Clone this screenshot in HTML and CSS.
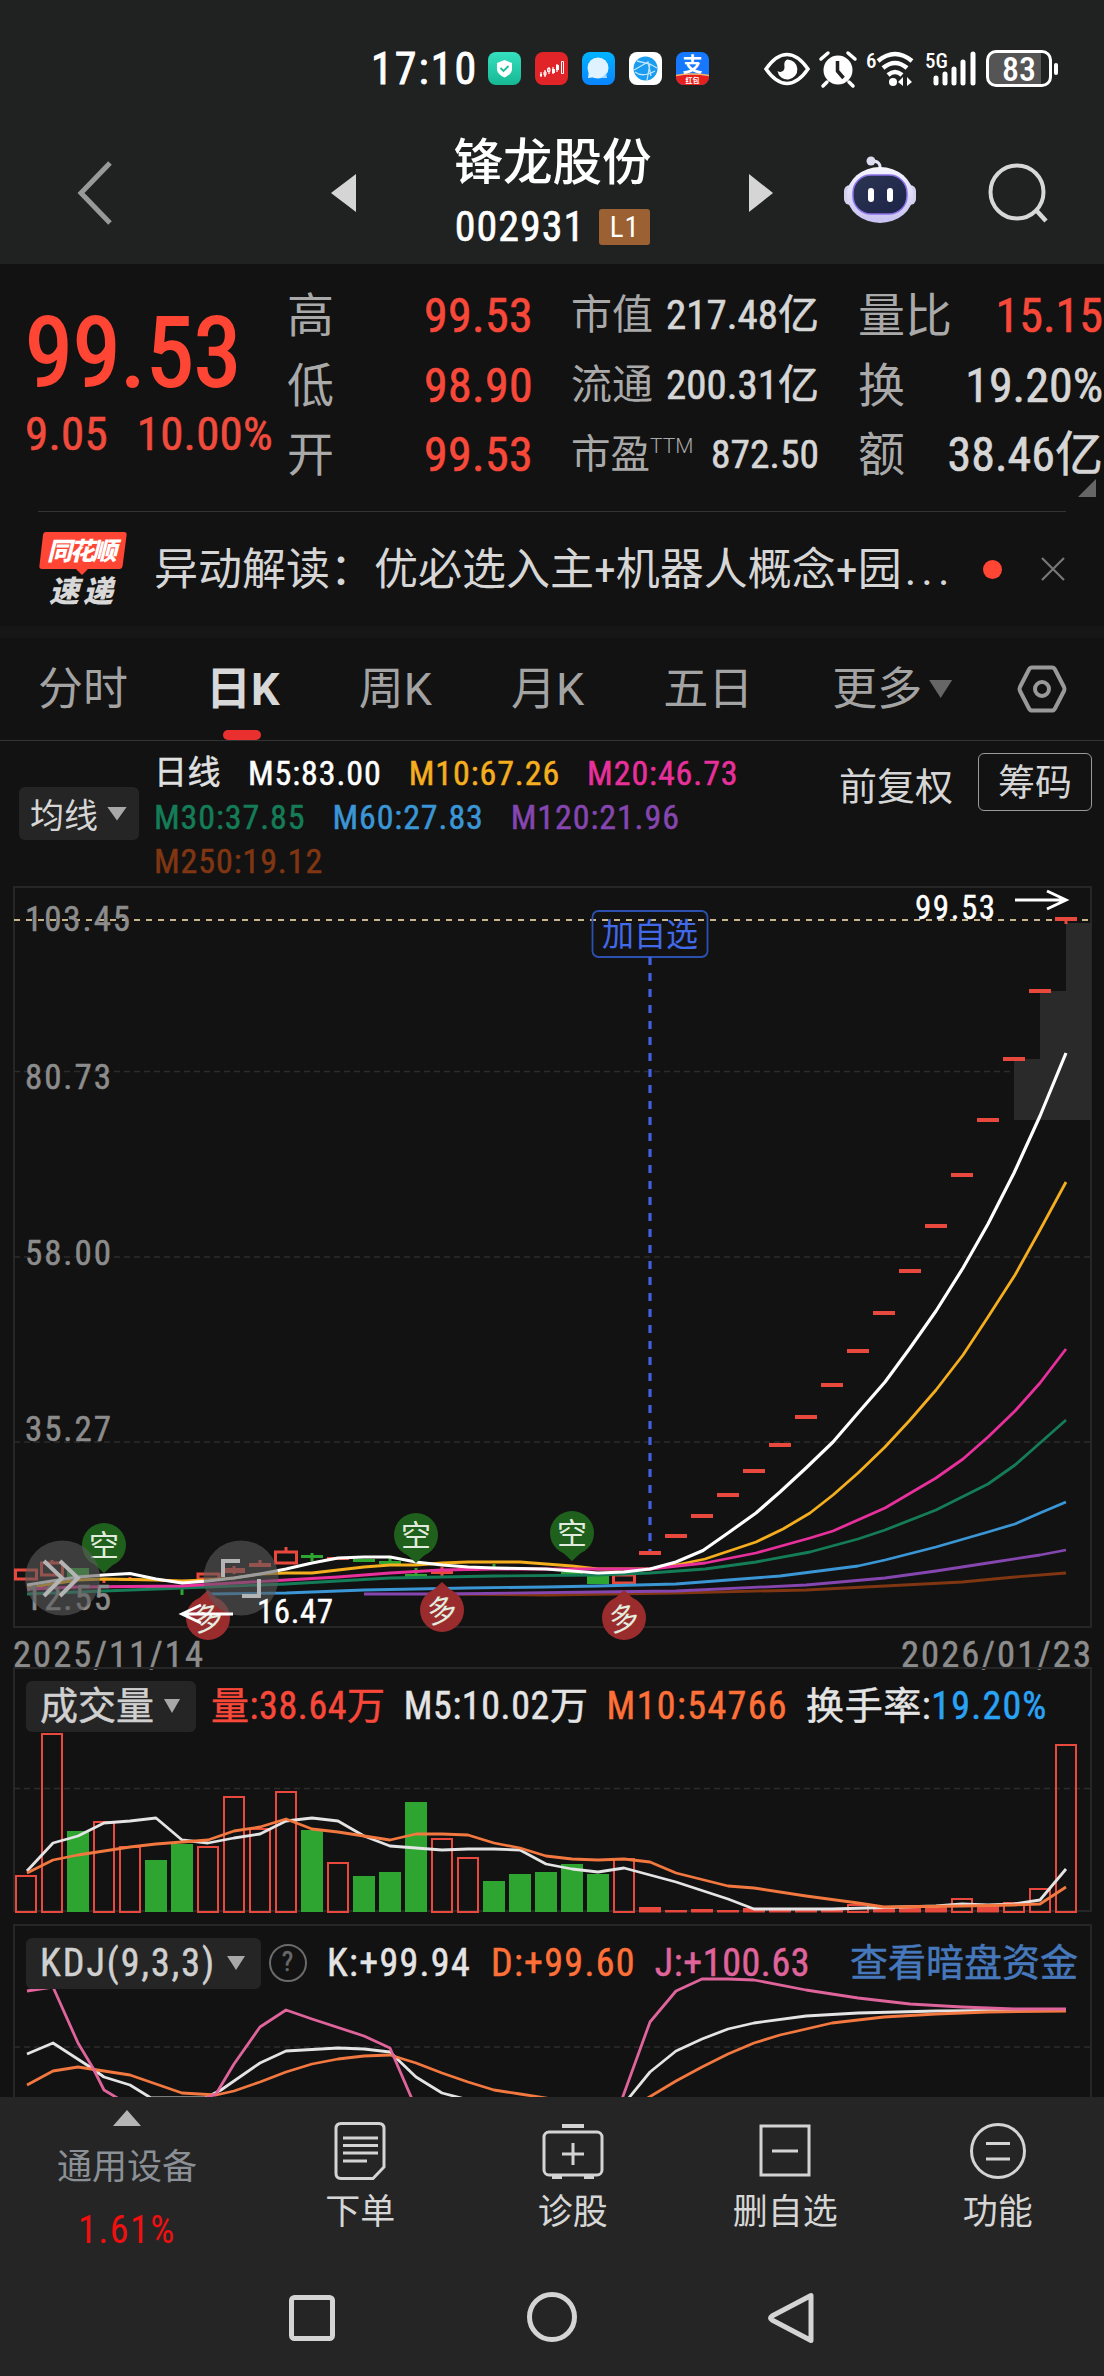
FILE: index.html
```html
<!DOCTYPE html>
<html lang="zh-CN">
<head>
<meta charset="UTF-8">
<meta name="viewport" content="width=device-width, initial-scale=1.0">
<title>锋龙股份 002931</title>
<link rel="stylesheet" href="styles.css">
</head>
<body>

<div class="status-bar">
    <span class="time">17:10</span>
    <div class="app-icons">
        <svg width="33" height="33" viewBox="0 0 33 33">
            <defs><linearGradient id="teal" x2="0" y2="1"><stop offset="0" stop-color="#35e0c0"/><stop offset="1" stop-color="#16b893"/></linearGradient></defs>
            <rect width="33" height="33" rx="8" fill="url(#teal)"/>
            <path d="M16.500 8l7.500 3v6c0 4-3.500 6.500-7.500 8.500-4-2-7.500-4.500-7.500-8.500v-6z" fill="#fff"/>
            <path d="M12.500 16l3 3 5-5" fill="none" stroke="#1bbf9b" stroke-width="1.800"/>
        </svg>
        <svg width="33" height="33" viewBox="0 0 33 33">
            <rect width="33" height="33" rx="8" fill="#e02427"/>
            <path d="M6 20v5M10 18v7M14 15v7M18 15v7M22 12v8" stroke="#fff" stroke-width="1.200"/>
            <path d="M5 22h2v2H5zM17 17h3v4h-3zM21 13h3v5h-3z" fill="#fff"/>
            <path d="M9 20h2v3H9zM12.500 16.500h2.500v3h-2.500zM26.500 9.500h2v12h-2z" fill="none" stroke="#fff"/>
        </svg>
        <svg width="33" height="33" viewBox="0 0 33 33">
            <defs><linearGradient id="blue" x2="0" y2="1"><stop offset="0" stop-color="#00b4ff"/><stop offset="1" stop-color="#0a84ff"/></linearGradient></defs>
            <rect width="33" height="33" rx="8" fill="url(#blue)"/>
            <circle cx="16" cy="16" r="10.500" fill="#dff2ff"/>
            <path d="M7 19l-1 7 8-1z" fill="#dff2ff"/>
            <path d="M24 21a11 11 0 0 1-6 5l7 0z" fill="#a6d8ff"/>
        </svg>
        <svg width="33" height="33" viewBox="0 0 33 33">
            <rect width="33" height="33" rx="8" fill="#fff"/>
            <circle cx="16.500" cy="16.500" r="12" fill="#1a9df0"/>
            <path d="M8 9l13 3 7 4M21 12l-3 16M5 18l14-8 3 14M6 20c5 4 11 4 20-1" fill="none" stroke="#bfe4ff" stroke-width="1.300"/>
        </svg>
        <svg width="33" height="33" viewBox="0 0 33 33">
            <defs><clipPath id="tile"><rect width="33" height="33" rx="8"/></clipPath></defs>
            <g clip-path="url(#tile)">
                <rect width="33" height="33" fill="#1677ff"/>
                <path d="M0 24q16-3 33 0v9H0z" fill="#e8201c"/>
                <path d="M0 23.500q16-3 33 0" fill="none" stroke="#ffb060" stroke-width="1.500"/>
            </g>
            <text x="16.500" y="20" class="tile-char">支</text>
            <text x="16.500" y="31" class="tile-sub">红包</text>
        </svg>
    </div>
    <div class="sys-icons">
        <svg width="46" height="34" viewBox="0 0 46 34">
            <path d="M2 17C9 7 15 2.500 23 2.500S37 7 44 17C37 27 31 31.500 23 31.500S9 27 2 17z" fill="none" stroke="#fff" stroke-width="3.500"/>
            <path d="M23 7.500a10 10 0 1 1-9.500 11.500c3 2 7 .5 7-3.500 0-3.500-1-5.500 2.500-8z" fill="#fff"/>
        </svg>
        <svg width="38" height="36" viewBox="0 0 38 36">
            <circle cx="19" cy="19" r="14.500" fill="#fff"/>
            <path d="M2 8l7-6M36 8l-7-6M8 31l-4 4M30 31l4 4" stroke="#fff" stroke-width="3.500" stroke-linecap="round"/>
            <path d="M18.500 10v10l6 7" fill="none" stroke="#202221" stroke-width="3.500"/>
        </svg>
        <svg width="50" height="38" viewBox="0 0 50 38">
            <text x="0" y="18" class="sys-small">6</text>
            <path d="M12 11Q29-3 46 11" class="wave"/>
            <path d="M17 18Q29 8 41 18" class="wave"/>
            <path d="M22 25Q29 19 36 25" class="wave"/>
            <circle cx="27" cy="32" r="4" fill="#fff"/>
            <path d="M37 27v9l-5-4M41 36v-9l5 5z" fill="#fff"/>
        </svg>
        <svg width="52" height="38" viewBox="0 0 52 38">
            <text x="0" y="18" class="sys-small">5G</text>
            <path d="M11 28v5M20 24v9M29 19v14M38 12v21M48 4v29" stroke="#fff" stroke-width="5" stroke-linecap="round"/>
        </svg>
        <div class="battery"><span>83</span></div>
    </div>
</div>

<div class="header">
    <svg class="back" width="40" height="66" viewBox="0 0 40 66"><path d="M35 3L6 33l29 30" fill="none" stroke="#999" stroke-width="5"/></svg>
    <div class="arrow-left"></div>
    <div class="title">
        <h1>锋龙股份</h1>
        <div class="code"><span>002931</span><em>L1</em></div>
    </div>
    <div class="arrow-right"></div>
    <svg class="robot" width="72" height="68" viewBox="0 0 72 68">
        <defs>
            <linearGradient id="shell" x2="0" y2="1"><stop offset="0" stop-color="#f6f6ff"/><stop offset="1" stop-color="#c6c1f0"/></linearGradient>
            <linearGradient id="face" x2="1" y2="1"><stop offset="0" stop-color="#2d3553"/><stop offset="1" stop-color="#1b2447"/></linearGradient>
        </defs>
        <path d="M36 13q1-8-8-8" fill="none" stroke="#e3e3f4" stroke-width="3"/>
        <circle cx="27" cy="5" r="4.500" fill="#dcdcee"/>
        <rect x="0" y="29" width="12" height="20" rx="6" fill="#d4d3ee"/>
        <rect x="60" y="29" width="12" height="20" rx="6" fill="#d4d3ee"/>
        <ellipse cx="36" cy="39" rx="33" ry="28" fill="url(#shell)"/>
        <rect x="9" y="19" width="54" height="39" rx="18" fill="url(#face)" stroke="#8a70e8" stroke-width="1.500"/>
        <path d="M27 35v8M46 35v8" stroke="#fff" stroke-width="6" stroke-linecap="round"/>
    </svg>
    <svg class="search" width="62" height="62" viewBox="0 0 62 62">
        <circle cx="29" cy="30" r="26.500" fill="none" stroke="#d8d8d8" stroke-width="4"/>
        <path d="M48 48l10 11" stroke="#d8d8d8" stroke-width="4.500"/>
    </svg>
</div>

<div class="quote">
    <div class="price">
        <strong>99.53</strong>
        <div class="change"><span>9.05</span><span>10.00%</span></div>
    </div>
    <dl class="col col-high">
        <div><dt>高</dt><dd class="up">99.53</dd></div>
        <div><dt>低</dt><dd class="up">98.90</dd></div>
        <div><dt>开</dt><dd class="up">99.53</dd></div>
    </dl>
    <dl class="col col-cap">
        <div><dt>市值</dt><dd>217.48亿</dd></div>
        <div><dt>流通</dt><dd>200.31亿</dd></div>
        <div class="pe"><dt>市盈<sup>TTM</sup></dt><dd>872.50</dd></div>
    </dl>
    <dl class="col col-vol">
        <div><dt>量比</dt><dd class="up">15.15</dd></div>
        <div><dt>换</dt><dd>19.20%</dd></div>
        <div><dt>额</dt><dd>38.46亿</dd></div>
    </dl>
    <i class="corner"></i>
</div>

<div class="news">
    <svg width="90" height="76" viewBox="0 0 90 76">
        <path d="M8 1h78q3 0 2.600 3l-4 31q-.4 3-3.400 3H50l-6 6-6-6H4q-3 0-2.600-3L5 4q.4-3 3-3z" fill="#ff4534"/>
        <text x="44" y="29" class="brand" textLength="70">同花顺</text>
        <text x="43" y="71" class="brand brand-sub" textLength="64">速递</text>
    </svg>
    <p><span>异动解读：</span>优必选入主+机器人概念+园<span class="dots">...</span></p>
    <i class="dot"></i>
    <svg width="26" height="26" viewBox="0 0 26 26"><path d="M2 2l22 22M24 2L2 24" stroke="#777" stroke-width="2.200"/></svg>
</div>

<div class="tabs">
    <span>分时</span>
    <span class="active">日K</span>
    <span>周K</span>
    <span>月K</span>
    <span>五日</span>
    <span class="more">更多<i class="caret"></i></span>
    <svg width="50" height="48" viewBox="0 0 50 48" fill="none" stroke="#999" stroke-width="4">
        <path d="M15 2.500h20q2 0 3 2l9 17.500q1 2 0 4l-9 17.500q-1 2-3 2H15q-2 0-3-2L3 26q-1-2 0-4l9-17.500q1-2 3-2z"/>
        <circle cx="25" cy="24" r="7"/>
    </svg>
</div>

<div class="ma-bar">
    <div class="pill">均线<i class="caret"></i></div>
    <div class="ma-list">
        <div><span class="c-line">日线</span><span class="c-m5">M5:83.00</span><span class="c-m10">M10:67.26</span><span class="c-m20">M20:46.73</span></div>
        <div><span class="c-m30">M30:37.85</span><span class="c-m60">M60:27.83</span><span class="c-m120">M120:21.96</span></div>
        <div><span class="c-m250">M250:19.12</span></div>
    </div>
    <span class="adjust">前复权</span>
    <span class="chips">筹码</span>
</div>

<svg class="chart" id="kline" width="1104" height="781" viewBox="0 886 1104 781"></svg>

<div class="panel panel-volume">
    <svg class="chart" id="volume" width="1104" height="257" viewBox="0 1667 1104 257"></svg>
    <div class="legend legend-volume">
        <span class="pill">成交量<i class="caret"></i></span>
        <span class="up">量:38.64万</span>
        <span>M5:10.02万</span>
        <span class="orange">M10:54766</span>
        <span>换手率:<b>19.20%</b></span>
    </div>
</div>

<div class="panel panel-kdj">
    <svg class="chart" id="kdj" width="1104" height="173" viewBox="0 1924 1104 173"></svg>
    <div class="legend legend-kdj">
        <span class="pill">KDJ(9,3,3)<i class="caret"></i></span>
        <i class="help">?</i>
        <span>K:+99.94</span>
        <span class="orange">D:+99.60</span>
        <span class="pink">J:+100.63</span>
        <a>查看暗盘资金</a>
    </div>
</div>

<div class="actions">
    <div class="sector">
        <i class="caret-up"></i>
        <span>通用设备</span>
        <b>1.61%</b>
    </div>
    <div class="action">
        <svg width="54" height="60" viewBox="0 0 54 60">
            <path d="M8 2.500h38q5 0 5 5V46L40 57.500H8q-5 0-5-5v-45q0-5 5-5z"/>
            <path d="M10 17h35M10 24.500h35M10 32h35M10 40h24"/>
        </svg>
        <span>下单</span>
    </div>
    <div class="action">
        <svg width="62" height="60" viewBox="0 0 62 60">
            <path d="M20 5h22" stroke-width="4"/>
            <rect x="2" y="11" width="58" height="43" rx="5"/>
            <path d="M31 22v22M20 33h22"/>
            <path d="M10 56h10M42 56h10" stroke-width="4"/>
        </svg>
        <span>诊股</span>
    </div>
    <div class="action">
        <svg width="54" height="60" viewBox="0 0 54 60">
            <rect x="3" y="5" width="48" height="49"/>
            <path d="M14 30h26"/>
        </svg>
        <span>删自选</span>
    </div>
    <div class="action">
        <svg width="58" height="60" viewBox="0 0 58 60">
            <circle cx="29" cy="30" r="26.500"/>
            <path d="M17 22.500h24M17 38h24"/>
        </svg>
        <span>功能</span>
    </div>
</div>

<div class="nav-bar">
    <svg width="48" height="54" viewBox="0 0 48 54"><rect x="3.500" y="6.500" width="41" height="41" rx="3"/></svg>
    <svg width="52" height="54" viewBox="0 0 52 54"><circle cx="26" cy="26" r="22.500"/></svg>
    <svg width="48" height="54" viewBox="0 0 48 54"><path d="M43 4.500v45L4 29q-3-2 0-4z" stroke-linejoin="round"/></svg>
</div>

<script src="chart.js"></script>
</body>
</html>
```
FILE: styles.css
```css
* {
    box-sizing: border-box;
}
body {
    width: 1104px;
    margin: 0;
    background-color: #121212;
    color: #d6d6d6;
    font-family: "Roboto Condensed", "Noto Sans CJK SC", sans-serif;
    font-weight: 400;
    overflow-x: hidden;
}
svg {
    display: block;
    flex: none;
    overflow: visible;
}
i, em {
    font-style: normal;
}
.up { color: #f8483a; }
.orange { color: #ff7038; }
.pink { color: #e0649c; }

/* status bar */
.status-bar {
    display: flex;
    align-items: center;
    height: 110px;
    padding: 27px 44px 0 371px;
    background-color: #202221;
    color: #fff;
}
.time {
    width: 117px;
    font-size: 44px;
    letter-spacing: 2px;
    line-height: 50px;
    -webkit-text-stroke: 0.9px;
}
.app-icons {
    display: flex;
    gap: 14px;
    margin-right: 55px;
}
.tile-char {
    font-size: 20px;
    font-weight: 700;
    fill: #fff;
    text-anchor: middle;
}
.tile-sub {
    font-size: 7px;
    font-weight: 700;
    fill: #fff;
    text-anchor: middle;
}
.sys-icons {
    display: flex;
    align-items: center;
    gap: 9px;
}
.sys-small {
    font-size: 21px;
    font-weight: 500;
    fill: #fff;
}
.wave {
    fill: none;
    stroke: #fff;
    stroke-width: 4.5;
}
.battery {
    position: relative;
    width: 66px;
    height: 37px;
    border: 3px solid #fff;
    border-radius: 10px;
    background: linear-gradient(90deg, #555 86%, #202221 86%);
    font-size: 34px;
    font-weight: 500;
    line-height: 32px;
    text-align: center;
}
.battery::after {
    content: "";
    position: absolute;
    right: -9px;
    top: 10px;
    width: 4px;
    height: 12px;
    border-radius: 2px;
    background-color: #fff;
}

/* header */
.header {
    display: flex;
    align-items: center;
    height: 154px;
    padding: 11px 54px 0 75px;
    background-color: #202221;
}
.back {
    margin-right: 216px;
}
.arrow-left, .arrow-right {
    border: 19px solid transparent;
}
.arrow-left {
    border-left: 0;
    border-right: 25px solid #d5d5d5;
}
.arrow-right {
    border-right: 0;
    border-left: 24px solid #d5d5d5;
}
.title {
    width: 395px;
    margin-top: -1px;
    text-align: center;
    color: #fff;
}
.title h1 {
    margin: 0 0 3px;
    font-size: 49.5px;
    font-weight: 500;
    line-height: 66px;
}
.code {
    display: flex;
    align-items: center;
    justify-content: center;
    gap: 14px;
    font-size: 42px;
    letter-spacing: 1px;
    line-height: 56px;
    -webkit-text-stroke: 0.6px;
}
.code em {
    width: 51px;
    height: 36px;
    border-radius: 3px;
    background-color: #9c6133;
    font-size: 29px;
    line-height: 37px;
    -webkit-text-stroke: 0;
}
.robot {
    margin: -6px 0 0 71px;
}
.search {
    margin-left: 72px;
}

/* quote */
.quote {
    position: relative;
    display: flex;
    height: 247px;
    padding-top: 17px;
}
.price {
    width: 287px;
    padding: 22px 0 0 25px;
    color: #ff4534;
}
.price strong {
    display: block;
    font-size: 97px;
    font-weight: 400;
    line-height: 100px;
    letter-spacing: -0.2px;
    -webkit-text-stroke: 2px;
}
.change {
    display: flex;
    gap: 29px;
    margin-top: 1px;
    font-size: 47px;
    letter-spacing: 0.2px;
    line-height: 60px;
    color: #f04b3c;
    -webkit-text-stroke: 0.6px;
}
.col {
    margin: 0;
    line-height: 69.5px;
}
.col div {
    display: flex;
    justify-content: space-between;
    height: 69.5px;
    white-space: nowrap;
}
.col dt {
    color: #a9a9a9;
}
.col dd {
    margin: 0;
    -webkit-text-stroke: 0.6px;
}
.col-high {
    width: 246px;
    font-size: 48px;
    letter-spacing: 0.3px;
}
.col-high dt, .col-vol dt {
    font-size: 47px;
}
.col-cap {
    width: 248px;
    margin-left: 38px;
    font-size: 41px;
}
.col-cap .pe {
    font-size: 39.5px;
}
.col-cap sup {
    font-family: Roboto, sans-serif;
    font-size: 21px;
    font-weight: 300;
    line-height: 0;
    vertical-align: 15px;
}
.col-vol {
    width: 245px;
    margin-left: 39px;
    font-size: 48px;
}
.corner {
    position: absolute;
    right: 8px;
    bottom: 14px;
    border: 9px solid;
    border-color: transparent #666 #666 transparent;
}

/* news strip */
.news {
    display: flex;
    align-items: center;
    height: 115px;
    margin: 0 38px;
    border-top: 1px solid #333;
}
.news p {
    flex: 1;
    margin: 2px 0 0 26px;
    font-size: 44px;
    line-height: 60px;
    white-space: nowrap;
}
.dots {
    margin-left: 3px;
    letter-spacing: 5px;
}
.brand {
    font-size: 25px;
    font-weight: 900;
    font-style: italic;
    fill: #fff;
    text-anchor: middle;
}
.brand-sub {
    font-size: 30px;
    fill: #d8d8d8;
}
.dot {
    width: 19px;
    height: 19px;
    margin-right: 38px;
    border-radius: 50%;
    background-color: #ff4534;
}

/* period tabs */
.tabs {
    display: flex;
    align-items: center;
    height: 115px;
    padding: 0 37px 0 38px;
    border-top: 12px solid #161616;
    border-bottom: 1px solid #333;
    font-family: Roboto, "Noto Sans CJK SC", sans-serif;
    font-size: 45px;
    line-height: 103px;
    color: #a3a3a3;
}
.tabs span {
    margin-right: 79px;
    white-space: nowrap;
}
.tabs .active {
    position: relative;
    margin-left: -1px;
    color: #d8d8d8;
    font-weight: 700;
}
.tabs .active::after {
    content: "";
    position: absolute;
    left: 17px;
    bottom: 1px;
    width: 38px;
    height: 10px;
    border-radius: 5px;
    background-color: #ea2f2f;
}
.tabs .more {
    display: flex;
    align-items: center;
    margin-right: auto;
}
.caret {
    display: inline-block;
    width: 20px;
    height: 14px;
    background-color: #a8a8a8;
    clip-path: polygon(0 0, 100% 0, 50% 100%);
}
.tabs .caret {
    width: 23px;
    height: 18px;
    margin-left: 7px;
    background-color: #666;
}
.pill {
    display: flex;
    align-items: center;
    border-radius: 6px;
    background-color: #252525;
    white-space: nowrap;
}

/* moving averages */
.ma-bar {
    display: flex;
    align-items: flex-start;
    height: 145px;
    padding: 12px 12px 0 19px;
    font-size: 34px;
}
.ma-bar .pill {
    width: 120px;
    height: 53px;
    margin: 34px 15px 0 0;
    padding-left: 11px;
    gap: 9px;
}
.ma-list {
    width: 685px;
    margin-top: -2px;
    letter-spacing: 0.9px;
    line-height: 44px;
    -webkit-text-stroke: 0.5px;
}
.ma-list div {
    display: flex;
    gap: 27px;
}
.c-line { color: #e0e0e0; font-size: 33px; letter-spacing: 0.5px; }
.c-m5 { color: #fff; }
.c-m10 { color: #f5ae1e; }
.c-m20 { color: #e8309c; }
.c-m30 { color: #147d58; }
.c-m60 { color: #3b96d6; }
.c-m120 { color: #8646b0; }
.c-m250 { color: #813612; }
.adjust {
    width: 139px;
    margin-top: 4px;
    font-size: 38px;
    line-height: 60px;
    white-space: nowrap;
}
.chips {
    width: 114px;
    height: 58px;
    border: 1.5px solid #9a9a9a;
    border-radius: 6px;
    font-size: 37px;
    line-height: 60px;
    text-align: center;
}

/* charts */
.chart text {
    font-size: 35px;
    fill: #8c8c8c;
}
.chart .scale {
    letter-spacing: 1.9px;
    stroke: #8c8c8c;
    stroke-width: 0.5;
}
.chart .date {
    font-size: 36.5px;
    stroke: #8c8c8c;
    stroke-width: 0.5;
}
.frame {
    fill: none;
    stroke: #262626;
    stroke-width: 2;
}
.grid {
    stroke: #2c2c2c;
    stroke-width: 1.5;
    stroke-dasharray: 6 4;
}
.line {
    fill: none;
    stroke-width: 2.8;
    stroke-linejoin: round;
}
.chart .mark {
    font-size: 30px;
    fill: #e2ecde;
    text-anchor: middle;
}
.chart .white {
    font-size: 33px;
    fill: #fff;
    stroke: #fff;
    stroke-width: 0.4;
}
.chart .add {
    font-size: 32px;
    fill: #4169e8;
    text-anchor: middle;
}
.panel {
    position: relative;
}
.legend {
    position: absolute;
    top: 12px;
    left: 26px;
    display: flex;
    align-items: center;
    width: 1052px;
    font-size: 38px;
    line-height: 54px;
    color: #e4e4e4;
    white-space: nowrap;
    -webkit-text-stroke: 0.5px;
}
.legend .pill {
    height: 51px;
    padding: 0 16px 0 14px;
    gap: 10px;
    color: #d0d0d0;
}
.legend b {
    font-weight: 400;
    letter-spacing: 1.2px;
    color: #2aa3f5;
}
.legend-volume {
    gap: 18px;
    letter-spacing: 0.6px;
}
.legend-volume .pill {
    width: 170px;
    margin-right: -3px;
    letter-spacing: 0;
}
.legend-volume .orange {
    letter-spacing: 1.4px;
}
.legend-kdj {
    gap: 20px;
    letter-spacing: 1.3px;
}
.legend-kdj .pill {
    width: 235px;
    gap: 11px;
    letter-spacing: 2px;
}
.legend-kdj .pink {
    margin-left: -1px;
    letter-spacing: 0.6px;
}
.legend a {
    margin-left: auto;
    letter-spacing: 0;
    color: #4678bb;
}
.help {
    width: 38px;
    height: 38px;
    margin: 0 0 0 -12px;
    border: 2.5px solid #6a6a6a;
    border-radius: 50%;
    font-size: 27px;
    line-height: 33px;
    text-align: center;
    color: #6a6a6a;
}

/* bottom actions */
.actions {
    display: flex;
    height: 153px;
    padding-left: 21px;
    background-color: #252525;
    font-size: 35px;
}
.sector {
    display: flex;
    flex-direction: column;
    align-items: center;
    width: 212px;
    padding-top: 13px;
    color: #8a9095;
}
.caret-up {
    border: 14px solid transparent;
    border-top: 0;
    border-bottom: 16px solid #b5b5b5;
}
.sector span {
    margin-top: 17px;
    line-height: 50px;
}
.sector b {
    margin-top: 12px;
    font-size: 38px;
    font-weight: 400;
    letter-spacing: 1.5px;
    line-height: 50px;
    color: #f01010;
}
.action {
    display: flex;
    flex-direction: column;
    align-items: center;
    width: 212.500px;
    padding-top: 24px;
}
.action:nth-child(2) {
    margin-left: 21px;
}
.action svg {
    fill: none;
    stroke: #d4d4d4;
    stroke-width: 3;
}
.action span {
    margin-top: 8px;
    line-height: 48px;
}
.nav-bar {
    display: flex;
    justify-content: center;
    gap: 190px;
    height: 126px;
    padding-top: 41px;
    background-color: #252525;
}
.nav-bar svg {
    fill: none;
    stroke: #d4d4d4;
    stroke-width: 5;
}
```
FILE: chart.js
```javascript
const STEP = 26;
const RED = '#e8493c';
const GREEN = '#2fa531';
const px = i => 26 + i * STEP;

const line = (points, color, width) =>
    `<polyline class="line" points="${points}" stroke="${color}"${width ? ` style="stroke-width:${width}"` : ''}/>`;
const grid = y => `<line class="grid" x1="14" x2="1091" y1="${y}" y2="${y}"/>`;
const rect = (x, y, w, h, fill) => `<rect x="${x}" y="${y}" width="${w}" height="${h}" fill="${fill}"/>`;
const hollow = (x, y, w, h, sw) =>
    `<rect x="${x}" y="${y}" width="${w}" height="${h}" fill="none" stroke="${RED}" stroke-width="${sw}"/>`;
const wick = (x, y1, y2, color) => rect(x - 1.5, y1, 3, y2 - y1, color);

function drawKline() {
    let s = '<rect class="frame" x="14" y="887" width="1077" height="740"/>';
    s += [1071.5, 1257, 1442].map(grid).join('');

    // gap area
    s += rect(1014, 1059, 77, 61, '#2a2a2a') + rect(1040, 991, 51, 68, '#2a2a2a') + rect(1066, 923, 25, 68, '#2a2a2a');
    s += '<line x1="14" x2="1091" y1="920" y2="920" stroke="#c9b68c" stroke-width="2" stroke-dasharray="6 6"/>';

    // candles on the left
    s += hollow(15.5, 1570, 21, 9, 3) + hollow(41.5, 1563, 21, 12, 3) + wick(52, 1560, 1563, RED);
    s += rect(67, 1568, 22, 10, GREEN);
    s += wick(104, 1578, 1583, RED) + rect(119, 1578, 22, 3, RED) + wick(130, 1577, 1580, RED);
    s += rect(145, 1585, 22, 3, GREEN) + wick(182, 1589, 1595, GREEN);
    s += hollow(198, 1574, 21, 5, 3) + rect(223, 1568, 22, 5, RED) + wick(234, 1566, 1574, RED);
    s += rect(249, 1563, 22, 4, RED) + wick(260, 1560, 1567, RED);
    s += hollow(275.5, 1552, 21, 11, 3) + wick(286, 1547, 1552, RED);
    s += rect(301, 1555, 22, 3, GREEN) + wick(312, 1553, 1561, GREEN) + rect(327, 1557, 22, 3, RED);
    s += rect(353, 1559, 22, 3, GREEN) + rect(379, 1561, 22, 3, GREEN) + wick(390, 1558, 1562, GREEN);
    s += rect(405, 1574, 22, 3, GREEN) + wick(416, 1568, 1577, GREEN);
    s += rect(431, 1569, 22, 5, RED) + wick(442, 1567, 1577, RED) + rect(457, 1568, 22, 3, RED);
    s += wick(494, 1564, 1567, GREEN) + rect(561, 1572, 22, 4, GREEN);
    s += rect(587, 1576, 22, 8, GREEN) + hollow(613.5, 1575, 21, 8, 3);

    // limit-up days
    [1553, 1536, 1516, 1495, 1471, 1445, 1417, 1385, 1351, 1313, 1271, 1226, 1175, 1120, 1059, 991, 919]
        .forEach((y, i) => s += rect(px(24 + i) - 11, y - 2, 22, 4, RED));
    s += wick(1066, 920, 924, RED);

    s += line('442,1594 546,1595 676,1593 806,1590 885,1586 962,1582 1015,1577 1066,1573', '#813612');
    s += line('364,1594 442,1594 598,1592 676,1591 806,1585 885,1578 936,1571 988,1563 1040,1555 1066,1550', '#8646b0');
    s += line('208,1594 286,1593 364,1590 468,1588 546,1587 598,1586 676,1584 780,1576 858,1566 885,1560 936,1547 988,1532 1015,1524 1040,1513 1066,1502', '#3b96d6');
    s += line('27,1594 182,1588 286,1584 390,1578 494,1576 598,1575 650,1573 705,1569 756,1562 810,1552 858,1539 885,1530 936,1510 988,1484 1015,1465 1040,1443 1066,1420', '#147d58');
    s += line('27,1588 52,1584 78,1580 104,1579 156,1580 182,1581 208,1580 234,1578 260,1574 286,1573 312,1573 338,1570 364,1567 390,1565 416,1565 442,1563 468,1562 520,1562 546,1564 572,1566 598,1569 650,1569 676,1565 705,1559 756,1542 783,1529 810,1513 833,1495 858,1473 885,1447 910,1420 936,1390 963,1355 988,1317 1015,1275 1040,1230 1066,1182', '#f5ae1e');
    s += line('27,1589 78,1587 182,1586 234,1583 286,1580 338,1577 390,1573 442,1570 494,1569 650,1569 705,1563 756,1553 810,1538 833,1531 885,1508 936,1478 963,1459 988,1437 1015,1411 1040,1383 1066,1349', '#e8309c');
    s += line('27,1585 52,1581 78,1577 104,1575 130,1573.5 156,1579 182,1583 208,1581 234,1578 260,1574 286,1569 312,1563 338,1558 364,1557 390,1557 416,1562 442,1565 468,1567 494,1568 546,1569 572,1571 598,1573 624,1572 650,1569 676,1562 703,1550.5 728,1533 756,1513 780,1492 806,1468 833,1442 858,1413 885,1382 910,1348 936,1311 963,1268 988,1224 1014,1173 1040,1116 1066,1053', '#fff', 3.2);

    // price scale
    [['103.45', 931], ['80.73', 1089], ['58.00', 1265], ['35.27', 1441], ['12.55', 1610]]
        .forEach(([t, y]) => s += `<text class="scale" x="25" y="${y}">${t}</text>`);
    s += '<text class="date" x="13" y="1667" textLength="190">2025/11/14</text>';
    s += '<text class="date" x="901" y="1667" textLength="190">2026/01/23</text>';

    // short / long signals
    [[104, 1545], [416, 1535], [572, 1533]].forEach(([x, y]) => {
        s += `<circle cx="${x}" cy="${y}" r="22" fill="#1f611c"/><path d="M${x - 13} ${y + 16}L${x} ${y + 28}L${x + 13} ${y + 16}z" fill="#1f611c"/>`;
        s += `<text class="mark" x="${x}" y="${y + 11}">空</text>`;
    });
    [[208, 1618], [442, 1610], [624, 1618]].forEach(([x, y]) => {
        s += `<circle cx="${x}" cy="${y}" r="22" fill="#9a2c2e"/><path d="M${x - 13} ${y - 16}L${x} ${y - 28}L${x + 13} ${y - 16}z" fill="#9a2c2e"/>`;
        s += `<text class="mark" x="${x}" y="${y + 11}" transform="rotate(-12 ${x} ${y})">多</text>`;
    });

    // watchlist marker
    s += '<rect x="592.5" y="911" width="115" height="46" rx="6" fill="none" stroke="#2b50b0" stroke-width="1.8"/>';
    s += '<text class="add" x="650" y="946">加自选</text>';
    s += '<line x1="650" x2="650" y1="957" y2="1551" stroke="#4062e0" stroke-width="3.2" stroke-dasharray="8 8"/>';

    // high / low callouts
    s += '<text class="white" x="915" y="919" textLength="80">99.53</text>';
    s += '<path d="M1015 900h50M1047 891l19 9-19 9" fill="none" stroke="#fff" stroke-width="3"/>';

    // floating buttons
    s += '<g fill="none" stroke="#b4b4b4" stroke-width="4">';
    s += '<circle cx="62.5" cy="1578" r="37.500" fill="#5a5a5a" fill-opacity=".6" stroke="none"/>';
    s += '<circle cx="241" cy="1578" r="37.500" fill="#5a5a5a" fill-opacity=".6" stroke="none"/>';
    s += '<path d="M44 1561l18 17-18 18M60 1561l18 17-18 18M240 1561h-17v16M259 1579v17h-17"/></g>';

    s += '<text class="white" x="257" y="1623" textLength="76">16.47</text>';
    s += '<path d="M233 1614h-50M201 1605l-19 9 19 9" fill="none" stroke="#fff" stroke-width="3"/>';
    document.getElementById('kline').innerHTML = s;
}

function drawVolume() {
    const tops = [1875, 1733, 1831, 1821, 1846, 1860, 1844, 1846, 1796, 1828, 1791, 1830, 1862, 1876, 1872, 1802,
        1838, 1857, 1881, 1874, 1872, 1864, 1874, 1858, 1907, 1910, 1909, 1910, 1908, 1910, 1910, 1910, 1904,
        1907, 1907, 1907, 1898, 1906, 1902, 1888, 1744];
    const down = [2, 5, 6, 11, 13, 14, 15, 18, 19, 20, 21, 22];
    let s = '<path class="frame" d="M14 1911V1668H1091V1911z"/>' + grid(1788.5);
    tops.forEach((y, i) => {
        const x = px(i) - 11;
        if (down.includes(i)) s += rect(x, y, 22, 1912 - y, GREEN);
        else if (y > 1905) s += rect(x, y, 22, 1912.5 - y, RED);
        else s += hollow(x + 1, y + 1, 20, 1911 - y, 2);
    });
    s += line('27,1871 53,1843 78,1836 104,1823 130,1821 156,1818 182,1840 208,1843 234,1838 260,1834 286,1821 312,1818 338,1821 364,1836 390,1846 416,1848 442,1850 468,1849 494,1849 520,1850 546,1864 572,1869 598,1872 624,1868 676,1882 728,1899 754,1909 832,1909 936,1906 962,1904 988,1905 1014,1904 1040,1900 1066,1869', '#e4e4e4');
    s += line('27,1873 53,1860 78,1855 104,1851 130,1847 156,1844 182,1842 208,1840 234,1831 260,1827 286,1819 312,1829 338,1832 364,1836 390,1840 416,1834 442,1834 468,1835 494,1843 520,1848 546,1856 572,1859 598,1860 624,1859 650,1862 676,1873 728,1886 754,1888 806,1896 858,1903 884,1907 962,1906 1014,1905 1040,1904 1066,1887', '#f27840');
    document.getElementById('volume').innerHTML = s;
}

function drawKdj() {
    let s = '<path class="frame" d="M14 2097V1925H1091V2097"/>' + grid(2047);
    s += '<clipPath id="kdjClip"><rect x="14" y="1925" width="1077" height="172"/></clipPath><g clip-path="url(#kdjClip)">';
    s += line('27,2054 53,2043 90,2067 104,2077 130,2085 151,2098 205,2098 221,2090 260,2063 286,2051 338,2048 364,2049 390,2052 416,2077 442,2093 465,2099 628,2099 650,2072 676,2051 702,2039 728,2029 754,2023 806,2016 858,2013 936,2011 1066,2010', '#e4e4e4');
    s += line('27,2085 53,2071 78,2067 104,2071 130,2075 156,2084 182,2093 216,2095 234,2091 260,2082 286,2072 312,2064 338,2059 364,2056 390,2055 416,2063 442,2073 468,2082 494,2090 520,2094 552,2099 646,2099 676,2081 702,2067 728,2054 754,2043 780,2035 832,2023 884,2017 936,2014 988,2012 1066,2011', '#f27840');
    s += line('27,1991 53,1987 78,2043 93,2068 104,2090 119,2099 203,2099 216,2094 234,2064 260,2027 286,2010 312,2019 364,2036 390,2048 412,2099 622,2099 650,2022 676,1991 702,1979 728,1979 754,1980 806,1990 858,1998 910,2004 962,2007 1014,2009 1066,2009', '#e0649c');
    document.getElementById('kdj').innerHTML = s + '</g>';
}

drawKline();
drawVolume();
drawKdj();
```
